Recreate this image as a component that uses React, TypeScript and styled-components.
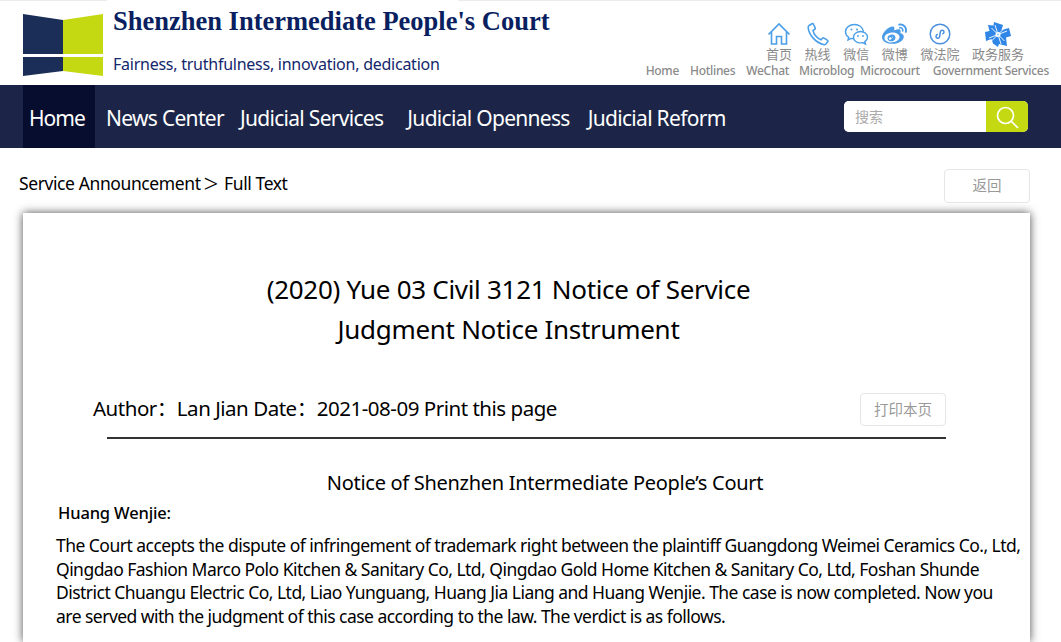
import React from "react";
import styled, { createGlobalStyle } from "styled-components";
import { FaWeibo } from "react-icons/fa";

const body = '"Noto Sans", "Noto Sans CJK SC", sans-serif';

const services = [
  { zh: "首页", icon: <HomeIcon /> },
  { zh: "热线", icon: <PhoneIcon /> },
  { zh: "微信", icon: <ChatIcon /> },
  { zh: "微博", icon: <FaWeibo size={25} color="#4a9be8" /> },
  { zh: "微法院", icon: <CourtIcon /> },
  { zh: "政务服务", icon: <PinwheelIcon /> },
];

const serviceNames = [
  { name: "Home", gap: 0 },
  { name: "Hotlines", gap: 11 },
  { name: "WeChat", gap: 11 },
  { name: "Microblog", gap: 10 },
  { name: "Microcourt", gap: 6 },
  { name: "Government Services", gap: 13 },
];

const navItems = [
  { label: "Home", gap: 0 },
  { label: "News Center", gap: 11 },
  { label: "Judicial Services", gap: 16 },
  { label: "Judicial Openness", gap: 24 },
  { label: "Judicial Reform", gap: 18 },
];

function HomeIcon() {
  return (
    <svg width="24" height="24" viewBox="0 0 24 24" fill="none" stroke="#4a9fe8" strokeWidth="1.6">
      <path d="M1.5 12.5 12 2l10.5 10.5M4.5 10v12H9.500v-7.500h5V22h5V10" />
    </svg>
  );
}

function PhoneIcon() {
  return (
    <svg width="24" height="24" viewBox="0 0 24 24" fill="none" stroke="#4a9fe8" strokeWidth="1.6">
      <path d="M3 3.500 6 1.800c.8-.3 1.300 0 1.600.7l1.600 3.300c.3.700.1 1.200-.5 1.600L7 8.500c.6 3.800 4.200 8 8 9.300l1.500-1.500c.5-.5 1-.5 1.600-.2l3.200 2c.7.400.8 1 .4 1.600l-1.800 2.300c-.6.600-1.400.8-2.300.6C9.500 20.500 2.500 12.500 2.200 5.200c0-.7.300-1.300.8-1.700Z" />
    </svg>
  );
}

function ChatIcon() {
  return (
    <svg width="25" height="24" viewBox="0 0 25 24" fill="none" stroke="#4a9fe8" strokeWidth="1.4">
      <path d="M10.500 2.500C5.500 2.500 1.500 5.700 1.500 9.700c0 2.300 1.300 4.300 3.300 5.600l-.8 2.700 3.200-1.600c.9.300 1.900.4 2.900.4M19.500 9.500C18.500 5.300 14.800 2.500 10.500 2.500" />
      <path d="M16.500 9.500c-4 0-7 2.600-7 5.700s3 5.700 7 5.700c.8 0 1.500-.1 2.200-.3l2.800 1.500-.7-2.400c1.700-1.100 2.700-2.700 2.700-4.500 0-3.100-3-5.700-7-5.700Z" />
      <circle cx="7.500" cy="7.500" r="1" fill="#4a9fe8" stroke="none" />
      <circle cx="13" cy="7.500" r="1" fill="#4a9fe8" stroke="none" />
      <circle cx="14" cy="14" r=".9" fill="#4a9fe8" stroke="none" />
      <circle cx="19" cy="14" r=".9" fill="#4a9fe8" stroke="none" />
    </svg>
  );
}

function CourtIcon() {
  return (
    <svg width="22" height="24" viewBox="0 0 22 24" fill="none" stroke="#4a8fe0" strokeWidth="1.500">
      <circle cx="11" cy="12" r="9.800" />
      <path d="M7 14.500c0 2 2.800 2.500 3.500.5l1-5.500c.5-2 3.500-1.500 3.500.5 0 1.300-1 1.800-1.700 1.900M8.800 12.300C7.800 12.500 7 13.300 7 14.500" />
    </svg>
  );
}

function PinwheelIcon() {
  return (
    <svg width="26" height="25" viewBox="0 0 26 25">
      <path d="M9 0 18 3 16.500 8 24 6 26 14 21 15.500 22 24 14 22 13 25 8 21.500 6.500 17 1 19 0 10 4.500 9 3 3 8.500 3.500Z" fill="#2f86e6" />
      <path d="M13 12.500 10 3M13 12.500 22 9M13 12.500 16 22M13 12.500 4 16M13 12.500 6.500 6M13 12.500 19.500 6M13 12.500 19.500 19M13 12.500 6.500 19" stroke="#fff" strokeWidth=".9" />
      <circle cx="13" cy="12.500" r="2.500" fill="#fff" />
      <circle cx="13" cy="12.500" r="1" fill="#8cc0f2" />
    </svg>
  );
}

function Logo() {
  return (
    <svg width="80" height="62" viewBox="0 0 80 62">
      <path d="M0 0 40 6V40H0Z" fill="#1b2e57" />
      <path d="M40 6 80 0V40H40Z" fill="#c5d912" />
      <path d="M0 43H40V57L0 62Z" fill="#1b2e57" />
      <path d="M40 43H80V62L40 57Z" fill="#c5d912" />
    </svg>
  );
}

export default function App() {
  return (
    <Page>
      <GlobalStyle />
      <TopStrip>
        <StripPiece $width={107} />
        <StripPiece $width={603} />
      </TopStrip>
      <Header>
        <Brand>
          <Logo />
          <BrandText>
            <CourtName>Shenzhen Intermediate People's Court</CourtName>
            <Motto>Fairness, truthfulness, innovation, dedication</Motto>
          </BrandText>
        </Brand>
        <Services>
          <ServiceRow>
            {services.map((s) => (
              <Service key={s.zh}>
                <ServiceIcon>{s.icon}</ServiceIcon>
                <span>{s.zh}</span>
              </Service>
            ))}
          </ServiceRow>
          <ServiceNames>
            {serviceNames.map((n) => (
              <ServiceName key={n.name} $gap={n.gap}>
                {n.name}
              </ServiceName>
            ))}
          </ServiceNames>
        </Services>
      </Header>

      <Nav>
        <NavList>
          {navItems.map((item, i) => (
            <NavItem key={item.label} $active={i === 0} $gap={item.gap}>
              {item.label}
            </NavItem>
          ))}
        </NavList>
        <Search>
          <SearchInput placeholder="搜索" />
          <SearchButton>
            <svg width="24" height="24" viewBox="0 0 24 24" fill="none" stroke="#fff" strokeWidth="1.700">
              <circle cx="10.500" cy="10.500" r="8" />
              <path d="M16.500 16.500 23 23" />
            </svg>
          </SearchButton>
        </Search>
      </Nav>

      <Crumbs>
        <CrumbText>
          Service Announcement<Arrow>&gt;</Arrow>Full Text
        </CrumbText>
        <GhostButton>返回</GhostButton>
      </Crumbs>

      <Card>
        <Title>
          (2020) Yue 03 Civil 3121 Notice of Service
          <br />
          Judgment Notice Instrument
        </Title>
        <Meta>
          <MetaText>Author：Lan Jian Date：2021-08-09 Print this page</MetaText>
          <GhostButton $short>打印本页</GhostButton>
        </Meta>
        <Heading>Notice of Shenzhen Intermediate People’s Court</Heading>
        <Addressee>Huang Wenjie:</Addressee>
        <Paragraph>
          The Court accepts the dispute of infringement of trademark right between the plaintiff Guangdong Weimei Ceramics Co., Ltd,
          <br />
          Qingdao Fashion Marco Polo Kitchen &amp; Sanitary Co, Ltd, Qingdao Gold Home Kitchen &amp; Sanitary Co, Ltd, Foshan Shunde
          <br />
          District Chuangu Electric Co, Ltd, Liao Yunguang, Huang Jia Liang and Huang Wenjie. The case is now completed. Now you
          <br />
          are served with the judgment of this case according to the law. The verdict is as follows.
        </Paragraph>
      </Card>
    </Page>
  );
}

const GlobalStyle = createGlobalStyle`
  html, body {
    margin: 0;
    height: 642px;
    overflow: hidden;
    background: #fff;
  }
  * {
    box-sizing: border-box;
  }
`;

const Page = styled.div`
  width: 1061px;
  height: 642px;
  overflow: hidden;
  font-family: ${body};
  color: #000;
`;

const TopStrip = styled.div`
  height: 1px;
  display: flex;
  justify-content: space-between;
`;

const StripPiece = styled.div<{ $width: number }>`
  width: ${(p) => p.$width}px;
  background: #ececec;
`;

const Header = styled.header`
  height: 84px;
  display: flex;
  justify-content: space-between;
`;

const Brand = styled.div`
  display: flex;
  align-items: flex-start;
  gap: 10px;
  padding: 13px 0 0 23px;
`;

const BrandText = styled.div`
  margin-top: -11px;
`;

const CourtName = styled.h1`
  margin: 0;
  font: bold 26.500px/36px "Liberation Serif", serif;
  color: #0a1f5f;
  white-space: nowrap;
`;

const Motto = styled.p`
  margin: 13px 0 0;
  font-size: 16px;
  line-height: 24px;
  letter-spacing: -0.25px;
  color: #14276b;
`;

const Services = styled.div`
  display: flex;
  flex-direction: column;
  align-items: flex-end;
  padding: 21px 12px 0 0;
`;

const ServiceRow = styled.div`
  display: flex;
  gap: 12.600px;
  margin-right: 25px;
`;

const Service = styled.div`
  display: flex;
  flex-direction: column;
  align-items: center;
  font-size: 13px;
  line-height: 17px;
  color: #8a8a8a;
`;

const ServiceIcon = styled.div`
  height: 24px;
`;

const ServiceNames = styled.div`
  display: flex;
  font-size: 12px;
  line-height: 16px;
  letter-spacing: -0.3px;
  font-weight: 500;
  color: #8a8a8a;
  white-space: nowrap;
`;

const ServiceName = styled.span<{ $gap: number }>`
  margin-left: ${(p) => p.$gap}px;
`;

const Nav = styled.nav`
  height: 63px;
  padding: 0 33px 0 23px;
  display: flex;
  align-items: center;
  justify-content: space-between;
  background: #1c2547;
`;

const NavList = styled.div`
  height: 100%;
  display: flex;
`;

const NavItem = styled.a<{ $active?: boolean; $gap: number }>`
  width: ${(p) => (p.$active ? "72px" : "auto")};
  margin-left: ${(p) => p.$gap}px;
  padding: 2px 0 0 ${(p) => (p.$active ? "6px" : "0")};
  display: flex;
  align-items: center;
  font-size: 21px;
  letter-spacing: ${(p) => (p.$active ? "-1px" : "-0.7px")};
  color: #fff;
  white-space: nowrap;
  background: ${(p) => (p.$active ? "#060d2e" : "transparent")};
`;

const Search = styled.div`
  width: 184px;
  height: 31px;
  display: flex;
  border-radius: 5px;
  overflow: hidden;
  background: #fff;
`;

const SearchInput = styled.input`
  flex: 1;
  min-width: 0;
  padding: 0 11px;
  border: 0;
  outline: 0;
  font-family: ${body};
  font-size: 14px;
  &::placeholder {
    color: #aaa;
  }
`;

const SearchButton = styled.button`
  width: 42px;
  padding: 0;
  border: 0;
  display: flex;
  align-items: center;
  justify-content: center;
  background: #c5d912;
`;

const Crumbs = styled.div`
  height: 65px;
  padding: 21px 31px 0 19px;
  display: flex;
  justify-content: space-between;
  align-items: flex-start;
`;

const CrumbText = styled.div`
  font-size: 17.500px;
  line-height: 28px;
  letter-spacing: -0.4px;
`;

const Arrow = styled.span`
  margin: 0 6px 0 3px;
  font-size: 26px;
  font-weight: 300;
  line-height: 20px;
  vertical-align: -3px;
`;

const GhostButton = styled.button<{ $short?: boolean }>`
  width: 86px;
  height: ${(p) => (p.$short ? "33px" : "34px")};
  padding: 0 0 3px;
  border: 1px solid #e6e6e6;
  border-radius: 4px;
  background: #fff;
  font-family: ${body};
  font-size: 14.500px;
  color: #999;
`;

const Card = styled.main`
  margin: 0 31px 0 23px;
  height: 429px;
  padding-top: 56px;
  background: #fff;
  box-shadow: 0 0 9px rgba(0, 0, 0, 0.7);
`;

const Title = styled.h2`
  margin: 0;
  padding-right: 36px;
  font-size: 26px;
  font-weight: 400;
  line-height: 40px;
  letter-spacing: -0.3px;
  text-align: center;
`;

const Meta = styled.div`
  margin: 44px 84px 0 84px;
  height: 46px;
  display: flex;
  align-items: flex-start;
  justify-content: space-between;
  border-bottom: 2px solid #333;
`;

const MetaText = styled.div`
  margin-left: -14px;
  font-size: 20.500px;
  line-height: 30px;
  letter-spacing: -0.48px;
`;

const Heading = styled.h3`
  margin: 28px 0 0;
  padding-left: 37px;
  font-size: 20px;
  font-weight: 400;
  line-height: 32px;
  letter-spacing: -0.3px;
  text-align: center;
`;

const Addressee = styled.div`
  margin: 1px 0 0 35px;
  font-size: 16.500px;
  font-weight: 500;
  line-height: 26px;
  letter-spacing: -0.15px;
`;

const Paragraph = styled.p`
  margin: 8px 0 0 33px;
  font-size: 17.500px;
  line-height: 23.500px;
  letter-spacing: -0.53px;
  white-space: nowrap;
`;
